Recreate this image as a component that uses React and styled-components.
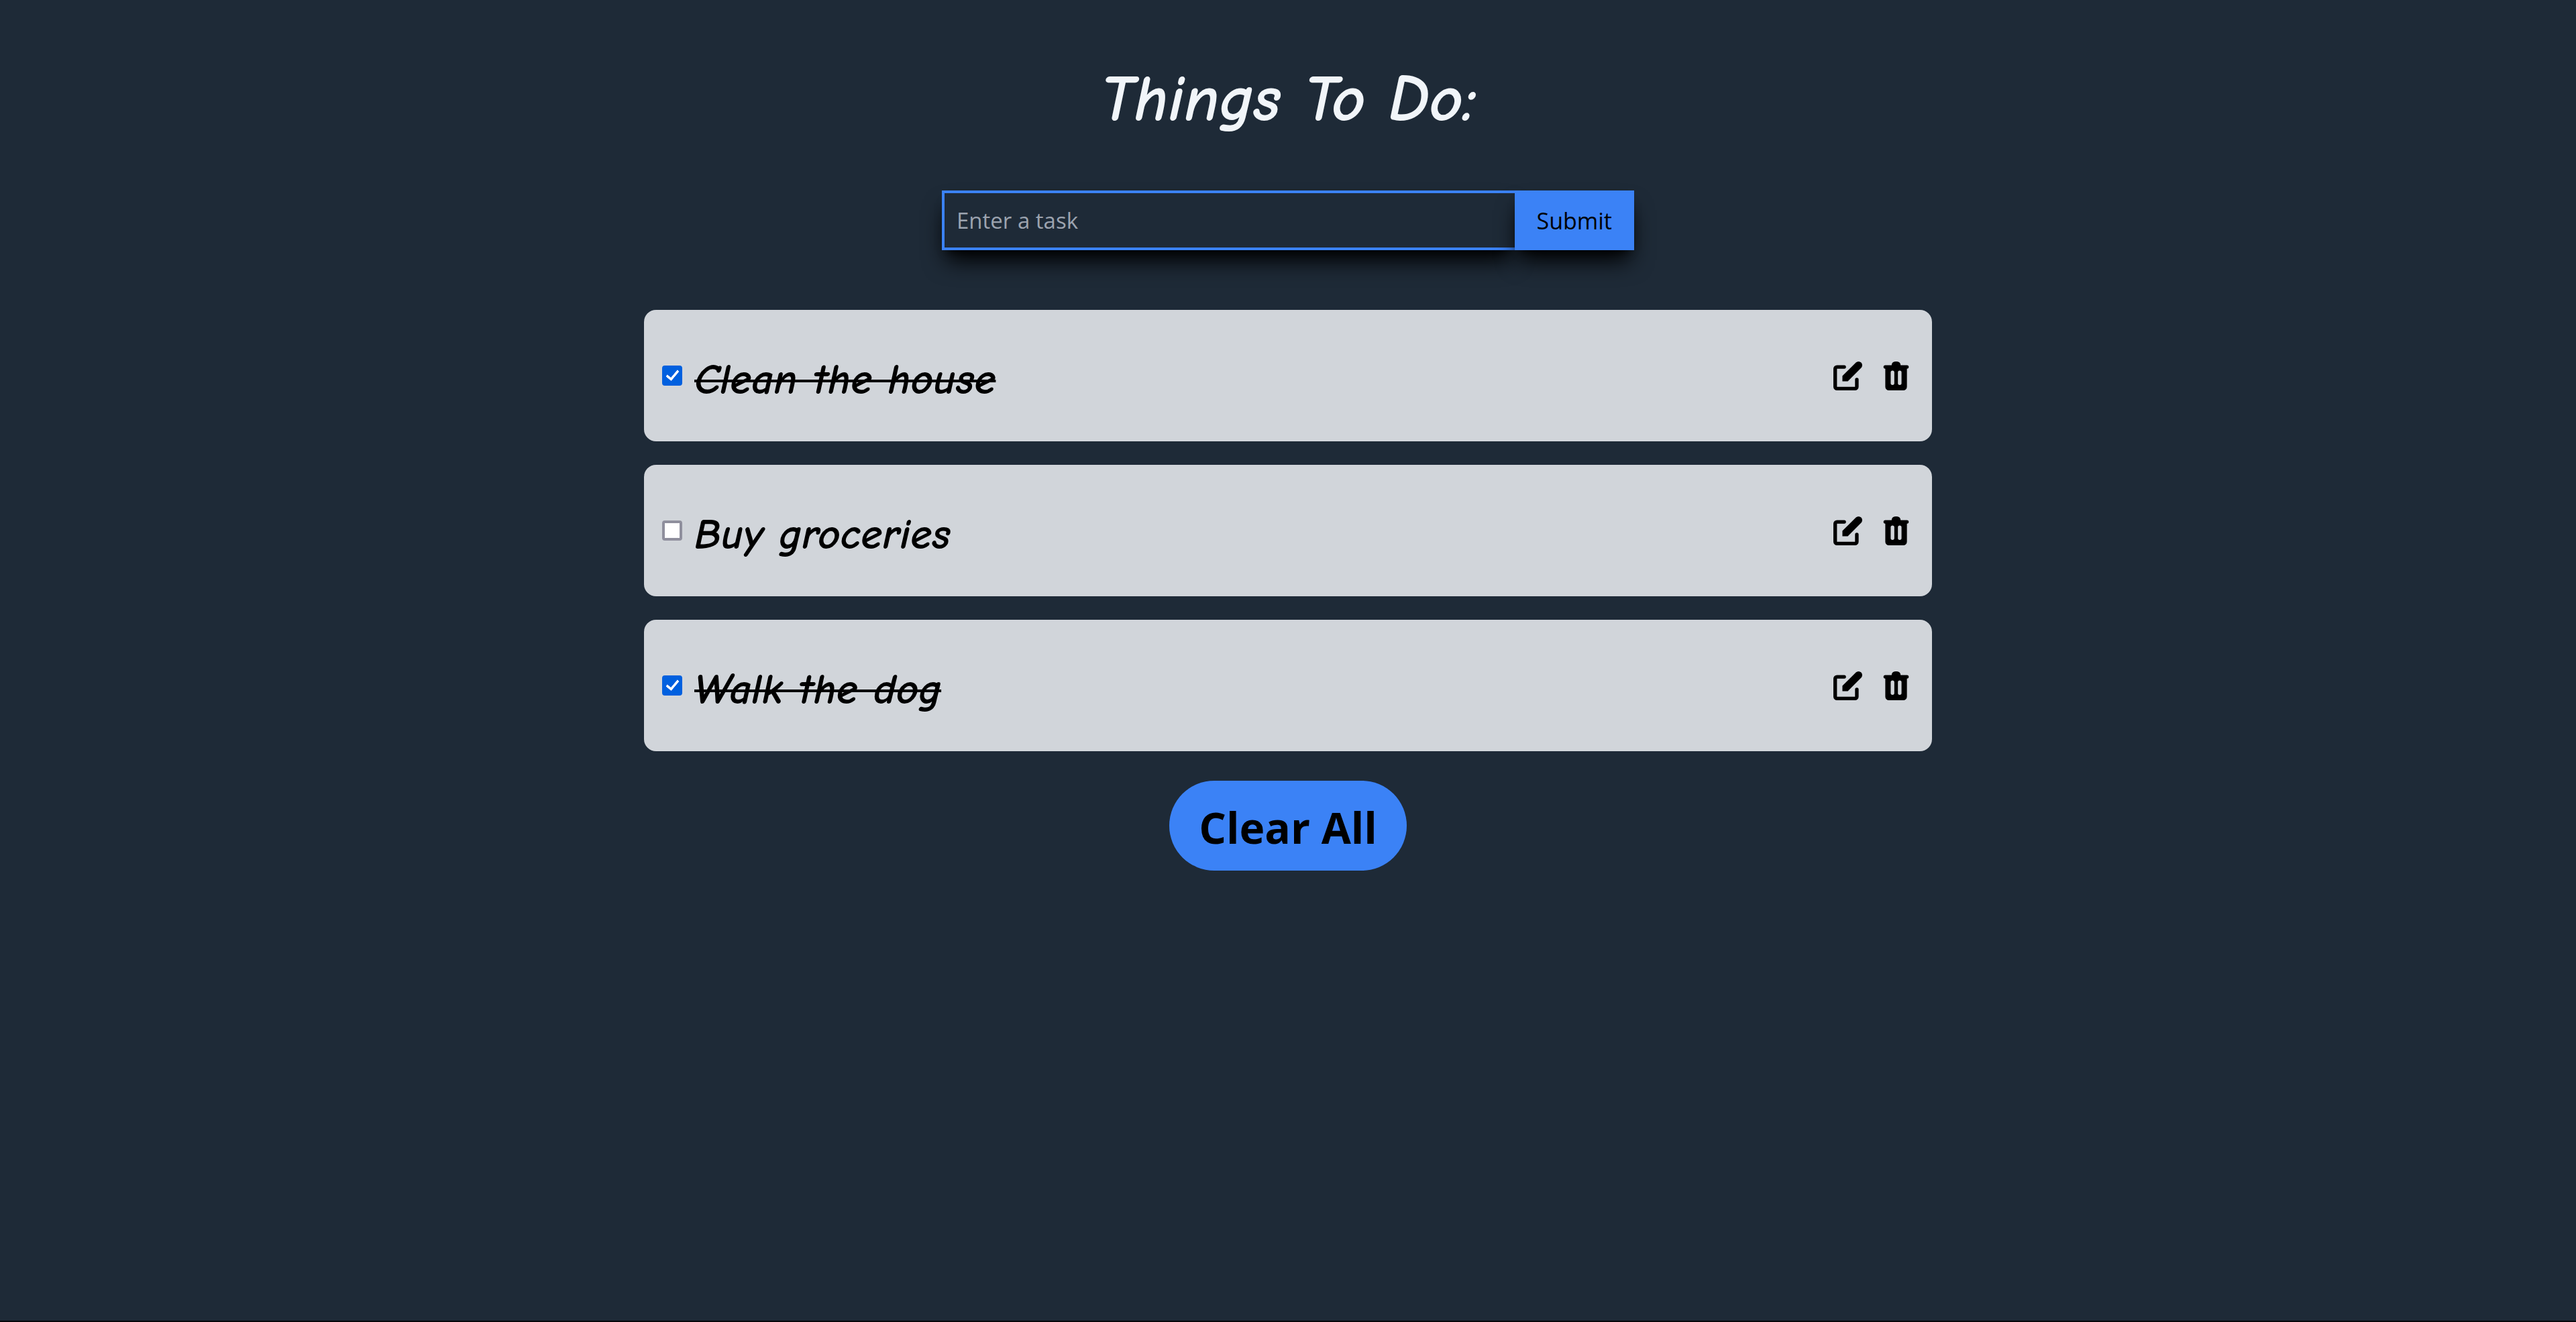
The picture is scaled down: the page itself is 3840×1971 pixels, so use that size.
import React, { useState } from "react";
import styled, { createGlobalStyle } from "styled-components";

const ui = `"Open Sans", "Noto Sans", sans-serif`;
const hand = `"Comic Neue", "Lato", sans-serif`;

const GlobalStyle = createGlobalStyle`
  *, *::before, *::after { box-sizing: border-box; }
  body {
    margin: 0;
    background: #1e2a37;
    font-family: ${ui};
    color: #000;
  }
  button, input { font: inherit; color: inherit; }
`;

const Page = styled.main`
  min-height: 100vh;
  display: flex;
  flex-direction: column;
  align-items: center;
  border-bottom: 2px solid #04060b;
`;

const Title = styled.h1`
  margin: 0;
  padding: 88px 0 76px;
  font-family: ${hand};
  font-style: italic;
  font-weight: 700;
  font-size: 97px;
  line-height: 120px;
  color: #f1f5f9;
`;

const TaskForm = styled.form`
  display: flex;
  width: 1032px;
  max-width: 100%;
  height: 89px;
`;

const castShadow = `box-shadow: 0 22px 34px -7px #000, 0 9px 14px -9px #000;`;

const TaskInput = styled.input`
  flex: 1;
  min-width: 0;
  padding: 0 18px;
  border: 4px solid #3b82f6;
  border-right: 0;
  border-radius: 0;
  outline: 0;
  background: #1e2a37;
  color: #f1f5f9;
  font-size: 33px;
  ${castShadow}
  &::placeholder { color: #9ca3af; opacity: 1; }
`;

const SubmitButton = styled.button`
  padding: 0 33px;
  border: 0;
  background: #3b82f6;
  font-size: 34px;
  cursor: pointer;
  ${castShadow}
`;

const TaskList = styled.ul`
  width: 50%;
  margin: 89px 0 44px;
  padding: 0;
  display: flex;
  flex-direction: column;
  gap: 35px;
  list-style: none;
`;

const TaskCard = styled.li`
  display: flex;
  align-items: center;
  justify-content: space-between;
  height: 196px;
  padding: 0 27px;
  border-radius: 18px;
  background: #d1d5da;
`;

const TaskLabel = styled.label`
  display: flex;
  align-items: center;
  gap: 18px;
  cursor: pointer;
`;

const Tick = styled.input`
  appearance: none;
  width: 30px;
  height: 30px;
  margin: 0;
  display: grid;
  place-items: center;
  border: 4px solid #8f8f9d;
  border-radius: 4px;
  background: #fff;
  &:checked {
    border-color: #0060df;
    background: #0060df;
  }
  &:checked::before {
    content: "";
    width: 11px;
    height: 19px;
    margin-top: -5px;
    border: solid #fff;
    border-width: 0 4px 4px 0;
    border-radius: 2px;
    transform: rotate(40deg);
  }
`;

const TaskName = styled.span`
  padding-top: 12px;
  font-family: ${hand};
  font-style: italic;
  font-weight: 700;
  font-size: 65px;
  line-height: 96px;
  text-decoration: ${(p) => (p.$done ? "line-through" : "none")};
  text-decoration-thickness: 4px;
`;

const Actions = styled.div`
  display: flex;
  gap: 18px;
`;

const IconButton = styled.button`
  display: grid;
  place-items: center;
  width: 54px;
  height: 54px;
  padding: 0;
  border: 0;
  background: none;
  cursor: pointer;
  svg { width: 43px; height: 43px; fill: #000; }
`;

const ClearButton = styled.button`
  height: 134px;
  padding: 5px 44px 0;
  border: 0;
  border-radius: 67px;
  background: #3b82f6;
  font-size: 64px;
  font-weight: 700;
  cursor: pointer;
`;

const EditIcon = () => (
  <svg viewBox="0 0 16 16" aria-hidden="true">
    <path d="M2 2H6a1 1 0 0 1 0 2H2V14H12V10a1 1 0 0 1 2 0v4a2 2 0 0 1-2 2H2a2 2 0 0 1-2-2V4a2 2 0 0 1 2-2Z" />
    <path d="M5 11V8L12.5.6A2.05 2.05 0 0 1 15.4 3.5L8 11Z" />
  </svg>
);

const TrashIcon = () => (
  <svg viewBox="-1 0 16 16" aria-hidden="true">
    <path
      fillRule="evenodd"
      d="M4.5 2A2 2 0 0 1 6.5 0h1a2 2 0 0 1 2 2H13a1 1 0 0 1 0 2v10a2 2 0 0 1-2 2H3a2 2 0 0 1-2-2V4a1 1 0 0 1 0-2ZM4 6v6a1 1 0 0 0 2 0V6a1 1 0 0 0-2 0ZM8 6v6a1 1 0 0 0 2 0V6a1 1 0 0 0-2 0Z"
    />
  </svg>
);

const initialTasks = [
  { id: 1, name: "Clean the house", done: true },
  { id: 2, name: "Buy groceries", done: false },
  { id: 3, name: "Walk the dog", done: true },
];

export default function App() {
  const [tasks, setTasks] = useState(initialTasks);
  const [draft, setDraft] = useState("");

  const addTask = (e) => {
    e.preventDefault();
    if (!draft.trim()) return;
    setTasks([...tasks, { id: Date.now(), name: draft.trim(), done: false }]);
    setDraft("");
  };
  const toggle = (id) =>
    setTasks(tasks.map((t) => (t.id === id ? { ...t, done: !t.done } : t)));
  const remove = (id) => setTasks(tasks.filter((t) => t.id !== id));
  const edit = (task) => {
    setDraft(task.name);
    remove(task.id);
  };

  return (
    <Page>
      <GlobalStyle />
      <Title>Things To Do:</Title>
      <TaskForm onSubmit={addTask}>
        <TaskInput
          type="text"
          aria-label="Enter a task"
          placeholder="Enter a task"
          value={draft}
          onChange={(e) => setDraft(e.target.value)}
        />
        <SubmitButton type="submit">Submit</SubmitButton>
      </TaskForm>
      <TaskList>
        {tasks.map((task) => (
          <TaskCard key={task.id}>
            <TaskLabel>
              <Tick type="checkbox" checked={task.done} onChange={() => toggle(task.id)} />
              <TaskName $done={task.done}>{task.name}</TaskName>
            </TaskLabel>
            <Actions>
              <IconButton type="button" aria-label="Edit" onClick={() => edit(task)}>
                <EditIcon />
              </IconButton>
              <IconButton type="button" aria-label="Delete" onClick={() => remove(task.id)}>
                <TrashIcon />
              </IconButton>
            </Actions>
          </TaskCard>
        ))}
      </TaskList>
      <ClearButton type="button" onClick={() => setTasks([])}>Clear All</ClearButton>
    </Page>
  );
}
